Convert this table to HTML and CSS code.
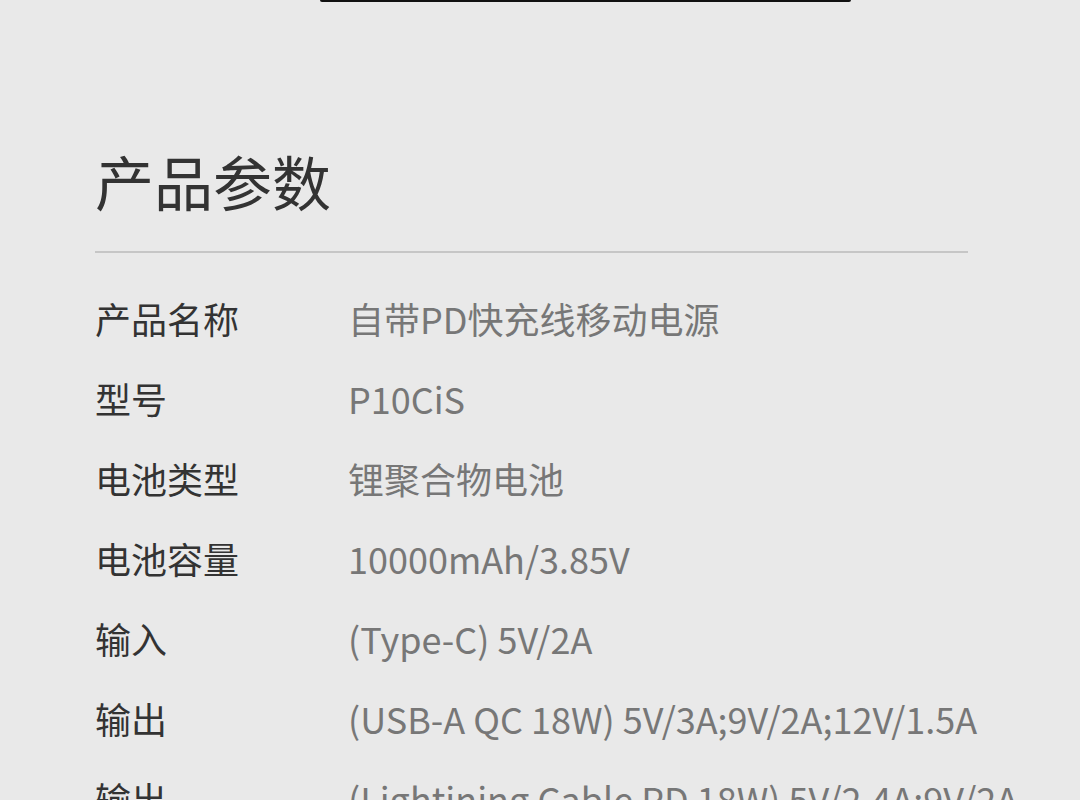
FILE: index.html
```html
<!DOCTYPE html>
<html lang="zh-CN">
<head>
  <meta charset="UTF-8">
  <meta name="viewport" content="width=device-width, initial-scale=1.0">
  <title>产品参数</title>
  <link rel="stylesheet" href="styles.css">
</head>
<body>
  <div class="photo-edge"></div>

  <section class="spec">
    <h1 class="spec-title">产品参数</h1>

    <div class="spec-list">
      <div class="spec-row">
        <span class="spec-label">产品名称</span>
        <span class="spec-value">自带PD快充线移动电源</span>
      </div>
      <div class="spec-row">
        <span class="spec-label">型号</span>
        <span class="spec-value">P10CiS</span>
      </div>
      <div class="spec-row">
        <span class="spec-label">电池类型</span>
        <span class="spec-value">锂聚合物电池</span>
      </div>
      <div class="spec-row">
        <span class="spec-label">电池容量</span>
        <span class="spec-value">10000mAh/3.85V</span>
      </div>
      <div class="spec-row">
        <span class="spec-label">输入</span>
        <span class="spec-value">(Type-C) 5V/2A</span>
      </div>
      <div class="spec-row">
        <span class="spec-label">输出</span>
        <span class="spec-value">(USB-A QC 18W) 5V/3A;9V/2A;12V/1.5A</span>
      </div>
      <div class="spec-row">
        <span class="spec-label">输出</span>
        <span class="spec-value">(Lightining Cable PD 18W) 5V/2.4A;9V/2A</span>
      </div>
    </div>
  </section>
</body>
</html>
```

FILE: styles.css
```css
:root {
  --bg: #e9e9e9;
  --text: #333333;
  --muted: #777777;
  --rule: #c6c6c6;
}

* {
  margin: 0;
  padding: 0;
  box-sizing: border-box;
}

html, body {
  height: 100%;
  overflow: hidden;
}

body {
  font-family: "Noto Sans CJK SC", "Noto Sans", sans-serif;
  background: var(--bg);
  color: var(--text);
}

/* bottom edge of the picture above */
.photo-edge {
  width: 531px;
  height: 2px;
  margin-left: 320px;
  background: #111;
  border-radius: 0 0 3px 3px;
}

.spec {
  padding: 143px 0 0 95px;
}

.spec-title {
  width: 873px;
  font-size: 59px;
  font-weight: 400;
  line-height: 72px;
  padding-bottom: 34px;
  border-bottom: 2px solid var(--rule);
}

.spec-list {
  margin-top: 25px;
}

.spec-row {
  display: grid;
  grid-template-columns: 253px 1fr;
  font-size: 36px;
  line-height: 80px;
  white-space: nowrap;
}

.spec-label {
  color: var(--text);
}

.spec-value {
  color: var(--muted);
}
```
